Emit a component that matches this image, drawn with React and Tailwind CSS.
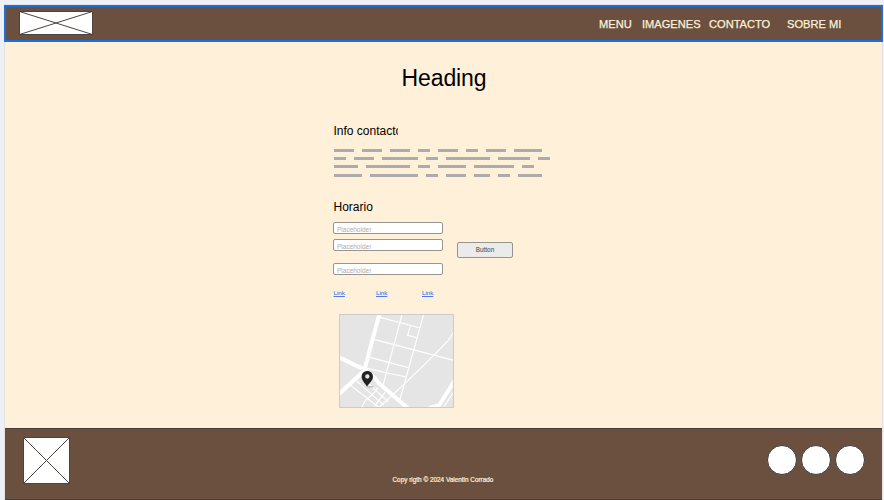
import React from "react";

const TEXT_LINES = [
  [5, 5, 5, 3, 5, 3, 5, 7],
  [3, 5, 9, 3, 11, 8, 3],
  [6, 11, 3, 7, 10, 3],
  [7, 12, 3, 5, 4, 3, 6],
];
const CHAR = 4;

function ImagePlaceholder({ className, width, height }) {
  return (
    <svg className={className} viewBox={`0 0 ${width} ${height}`} fill="none" stroke="#4a4541">
      <rect x="0.5" y="0.5" width={width - 1} height={height - 1} fill="#fff" />
      <path d={`M0.5 0.5L${width - 0.5} ${height - 0.5}M${width - 0.5} 0.5L0.5 ${height - 0.5}`} />
    </svg>
  );
}

function Header() {
  return (
    <header className="-mx-px flex h-[37px] shrink-0 items-start border-2 border-[#1b6fdb] bg-[#6b503f] pl-[13px] text-[11.1px] leading-[14px] text-[#fff0d9]">
      <ImagePlaceholder className="mt-[4px] h-[24px] w-[74px] shrink-0" width={74} height={24} />
      <nav className="mt-[10px] flex whitespace-nowrap [-webkit-text-stroke:0.25px_#fff0d9]">
        <a className="ml-[506px] w-[43px]">MENU</a>
        <a className="w-[67px]">IMAGENES</a>
        <a className="w-[78px]">CONTACTO</a>
        <a>SOBRE MI</a>
      </nav>
    </header>
  );
}

function Paragraph() {
  return (
    <div className="mt-[11px] flex flex-col gap-[5px] pl-[0.5px]">
      {TEXT_LINES.map((line, i) => (
        <div key={i} className="flex h-[3px] gap-[8px] last:mt-px">
          {line.map((n, j) => (
            <span
              key={j}
              className="bg-[#aaaaaa] bg-[repeating-linear-gradient(90deg,#a8a8a8_0px,#a8a8a8_1px,#adadad_1px,#adadad_4px)]"
              style={{ width: n * CHAR }}
            />
          ))}
        </div>
      ))}
    </div>
  );
}

function Field({ className = "" }) {
  return (
    <div className={`h-[12px] w-[110px] rounded-[2px] border border-[#99948d] bg-white pl-[3px] pt-[2px] text-[6.5px] leading-[9px] text-[#adadad] ${className}`}>
      Placeholder
    </div>
  );
}

function StreetMap() {
  return (
    <svg className="ml-[6px] mt-[17px] h-[94px] w-[115px]" viewBox="42 26 345 282" fill="none">
      <rect x="42" y="26" width="345" height="282" fill="#e5e5e5" />
      <g stroke="#fff" strokeWidth="3.4">
        <path d="M165 36L286 68M150 103L386 165M135 156L250 187M126 189L243 215" />
        <path d="M231 27L174 240M296 27L225 282" />
        <path d="M255 64L248 90L276 97" />
        <path d="M386 80Q377 96 370 105Q300 180 160 308" />
        <path d="M78 241L164 308M94 226L177 300M132 236L190 290" />
        <path d="M110 308Q117 286 130 278Q145 268 158 247M148 303L180 261M386 260L354 308" />
      </g>
      <g stroke="#fff" strokeWidth="12">
        <path d="M163 27L119 191" />
        <path d="M42 156L117 192Q150 213 160 232L248 308" />
        <path d="M119 195L42 266" />
        <path d="M388 228L342 300L312 308" />
      </g>
      <path d="M126 244L143 242L146 246L128 247Z" fill="#b8b8b8" />
      <path
        fill="#222"
        fillRule="evenodd"
        d="M127 197C117 197 110 204 110 214C110 226 121 234 126 244C131 234 144 226 144 214C144 204 137 197 127 197ZM127 207A6.5 6.5 0 1 1 127 220A6.5 6.5 0 1 1 127 207Z"
      />
      <rect x="43.5" y="27.5" width="342" height="279" stroke="#cccccc" strokeWidth="3" />
    </svg>
  );
}

function Main() {
  return (
    <main className="h-[386px] shrink-0 pl-[328px] text-black">
      <h1 className="ml-[68.5px] pt-[22px] text-[23px] leading-[28px] tracking-[-0.1px]">Heading</h1>
      <h2 className="mt-[32px] w-[65px] overflow-hidden whitespace-nowrap pl-[0.5px] text-[12px] leading-[14px]">Info contacto</h2>
      <Paragraph />
      <h2 className="mt-[23px] pl-[0.5px] text-[12px] leading-[14px]">Horario</h2>
      <div className="mt-[8px] flex">
        <div>
          <Field />
          <Field className="mt-[5px]" />
          <Field className="mt-[12px]" />
        </div>
        <button className="ml-[14px] mt-[20px] h-[16px] w-[56px] rounded-[2px] border border-[#99948d] bg-[#ebebeb] text-[6.4px] leading-[14px] text-[#444]">
          Button
        </button>
      </div>
      <div className="mt-[14px] flex pl-[0.5px] text-[6.2px] leading-[8px] text-[#4a7cf0] [-webkit-text-stroke:0.1px_#4a7cf0]">
        <a className="w-[42.5px] underline">Link</a>
        <a className="w-[46px] underline">Link</a>
        <a className="underline">Link</a>
      </div>
      <StreetMap />
    </main>
  );
}

function Footer() {
  return (
    <footer className="flex h-[72px] shrink-0 border-y border-[#493f38] bg-[#6b503f]">
      <ImagePlaceholder className="ml-[17.5px] mt-[8px] h-[47px] w-[47px] shrink-0" width={47} height={47} />
      <p className="ml-[323px] mt-[47px] w-[374.5px] whitespace-nowrap text-[6.4px] leading-[8px] text-[#fff0d9] [-webkit-text-stroke:0.2px_#fff0d9]">
        Copy rigth © 2024 Valentin Corrado
      </p>
      <div className="mt-[16px] flex gap-[4px]">
        {[0, 1, 2].map((i) => (
          <span key={i} className="size-[30px] rounded-full border border-[#3d3a38] bg-white" />
        ))}
      </div>
    </footer>
  );
}

export default function App() {
  return (
    <div className="h-[500px] w-[884px] overflow-hidden bg-[#edf1f6] pl-[5px] pr-[2px] pt-[5px] font-['Liberation_Sans',Arial,sans-serif]">
      <div className="flex flex-col bg-[#fff0d9] shadow-[0_0_0_1px_#e1e2e3]">
        <Header />
        <Main />
        <Footer />
      </div>
    </div>
  );
}
